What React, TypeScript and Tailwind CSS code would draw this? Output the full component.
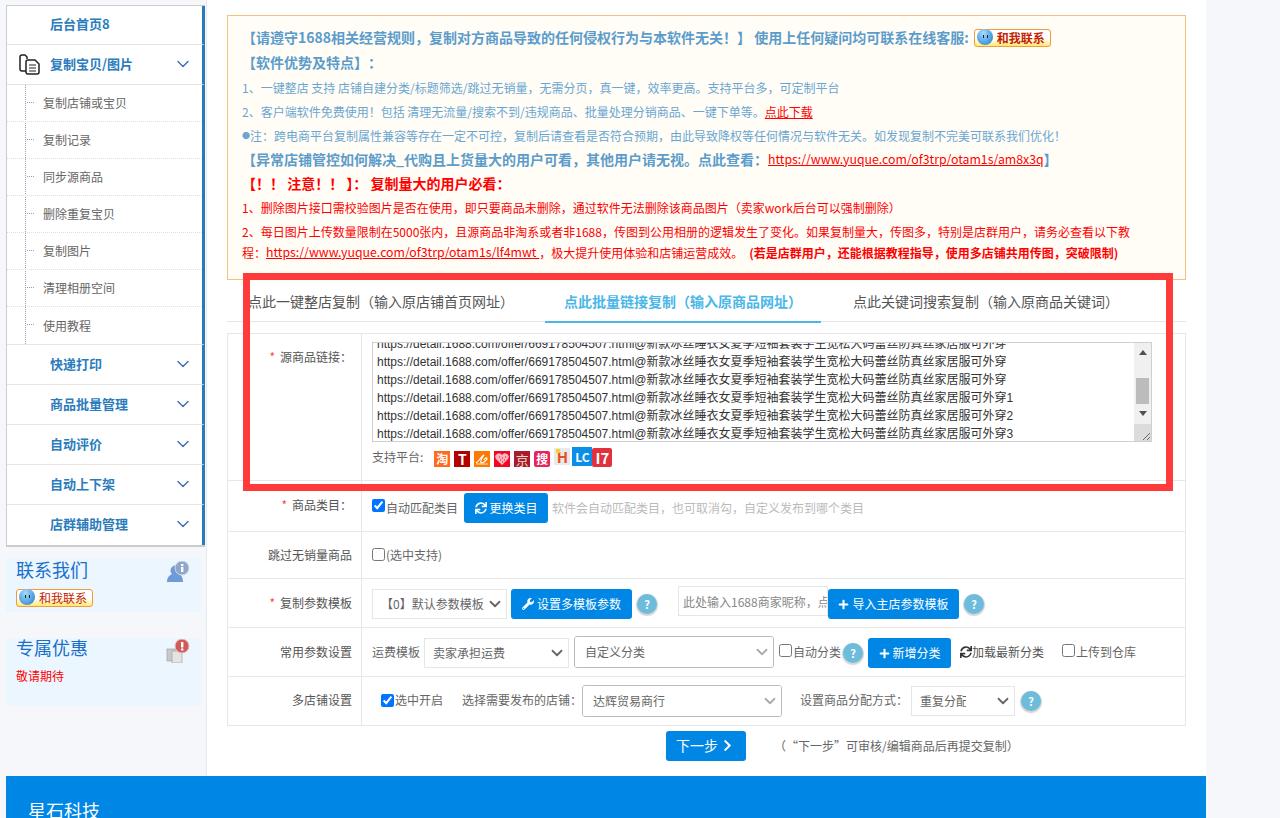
import { ChevronDown } from 'lucide-react';
import { FaChevronRight, FaPlus, FaSync, FaWrench } from 'react-icons/fa';
import type { ReactNode } from 'react';

const subItems = ['复制店铺或宝贝', '复制记录', '同步源商品', '删除重复宝贝', '复制图片', '清理相册空间', '使用教程'];
const lowerItems = ['快递打印', '商品批量管理', '自动评价', '自动上下架', '店群辅助管理'];
const linkSuffixes = ['', '', '1', '2', '3'];
const linkText = 'https://detail.1688.com/offer/669178504507.html@新款冰丝睡衣女夏季短袖套装学生宽松大码蕾丝防真丝家居服可外穿';

function QQBadge() {
  return (
    <span className="relative inline-flex h-[18px] w-[77px] items-center rounded-[3px] border border-[#f59a3c] bg-linear-to-b from-white from-50% to-[#ffe96a] pl-[22px] text-[12px] leading-none text-[#c32300]">
      <span className="absolute -top-[1px] left-[2px] h-[16px] w-[16px] rounded-full bg-radial-[at_40%_25%] from-[#a5dcfb] to-[#1b79d0]">
        <span className="absolute left-[6px] top-[6px] h-[3px] w-[1px] bg-[#123]" />
        <span className="absolute left-[10px] top-[6px] h-[3px] w-[1px] bg-[#123]" />
      </span>
      和我联系
    </span>
  );
}

function HelpDot() {
  return (
    <span className="flex h-[20px] w-[20px] shrink-0 items-center justify-center rounded-full bg-[#6dbcdc] text-[11px] font-bold leading-none text-white shadow-[0_1px_1px_1px_#d5d5d5]">
      ?
    </span>
  );
}

function BlueButton({ icon, children, className }: { icon?: ReactNode; children: ReactNode; className: string }) {
  return (
    <button className={`flex h-[30px] shrink-0 items-center justify-center gap-[3px] rounded-[3px] bg-[#0087e6] text-white ${className}`}>
      {icon}
      {children}
    </button>
  );
}

function FormRow({ label, required, height, top, raise, children }: { label: string; required?: boolean; height: string; top?: boolean; raise?: boolean; children: ReactNode }) {
  return (
    <div className={`flex border-b border-[#e7e7e7] last:border-b-0 ${height}`}>
      <div className={`flex w-[134px] shrink-0 justify-end border-r border-[#e7e7e7] pr-[9px] text-[#555] ${top ? 'pt-[14px]' : 'items-center'} ${raise ? 'pb-[2px]' : ''}`}>
        {required && <span className="mr-[5px] text-[#f44]">*</span>}
        {label}
      </div>
      <div className="flex min-w-0 flex-1 items-center pl-[10px]">{children}</div>
    </div>
  );
}

function SelectBox({ value, className, arrow, pad }: { value: string; className: string; arrow: string; pad: string }) {
  return (
    <div className={`relative shrink-0 ${className}`}>
      <select className={`h-full w-full appearance-none bg-white text-[12px] text-[#666] ${pad}`}>
        <option>{value}</option>
      </select>
      <ChevronDown className={`pointer-events-none absolute right-[2px] top-1/2 -translate-y-1/2 ${arrow}`} size={18} strokeWidth={2.4} />
    </div>
  );
}

function Sidebar() {
  return (
    <aside className="w-[207px] shrink-0 border-r border-[#e6e9f0] pl-[6px] pt-[5px]">
      <nav className="w-[199px] border-b-2 border-l border-t border-[#ccc] bg-white">
        <div className="flex h-[39px] items-center border-b border-r-[3px] border-b-[#e5e5e5] border-r-[#2a7ab8] pb-[2px] pl-[43px] text-[13px] font-bold text-[#2b7cbc]">
          后台首页8
        </div>
        <div className="relative flex h-[40px] items-center border-b border-r-[3px] border-b-[#e5e5e5] border-r-[#2a7ab8] pb-[2px] pl-[43px] text-[13px] font-bold text-[#2b7cbc]">
          <svg className="absolute left-[12px] top-[9px]" width="21" height="21" viewBox="0 0 21 21" fill="none" stroke="#222" strokeWidth="1.5">
            <path d="M7 17H3a2 2 0 0 1-2-2V3a2 2 0 0 1 2-2h3l2 2v2" />
            <path d="M9 6h7l4 4v8a2 2 0 0 1-2 2H9a2 2 0 0 1-2-2V8a2 2 0 0 1 2-2z" fill="#fff" />
            <path d="M10 11h7M10 14h7M10 17h7" strokeWidth="1.2" />
          </svg>
          复制宝贝/图片
          <ChevronDown className="absolute right-[9px] top-[9px] text-[#3f6fb5]" size={20} strokeWidth={1.7} />
        </div>
        <div className="relative border-b border-r-[3px] border-b-[#e5e5e5] border-r-[#2a7ab8]">
          <span className="absolute bottom-0 left-[18px] top-0 border-l border-dotted border-[#8aa0bc]" />
          {subItems.map((item, i) => (
            <div key={item} className={`relative flex h-[37px] items-center pl-[36px] text-[12px] text-[#666] ${i < 6 ? 'border-b border-dotted border-[#ddd]' : ''}`}>
              <span className="absolute left-[20px] top-[17px] w-[7px] border-t border-dotted border-[#8aa0bc]" />
              {item}
            </div>
          ))}
        </div>
        {lowerItems.map((item, i) => (
          <div key={item} className={`relative flex h-[40px] items-center border-r-[3px] border-r-[#2a7ab8] pb-[2px] pl-[43px] text-[13px] font-bold text-[#2b7cbc] ${i < 4 ? 'border-b border-b-[#e5e5e5]' : ''}`}>
            {item}
            <ChevronDown className="absolute right-[9px] top-[9px] text-[#3f6fb5]" size={20} strokeWidth={1.7} />
          </div>
        ))}
      </nav>

      <section className="relative mt-[11px] h-[54px] w-[195px] bg-[#ecf6fe] pl-[10px]">
        <div className="text-[18px] leading-[22px] text-[#1a6fc9]">联系我们</div>
        <div className="mt-[9px] flex"><QQBadge /></div>
        <svg className="absolute right-[11px] top-[3px]" width="24" height="22" viewBox="0 0 24 22">
          <path d="M1 21c0-5 3-7 5-8a5 5 0 1 1 7 0c2 1 4 3 4 8z" fill="#6f9ad8" />
          <circle cx="16" cy="7" r="7" fill="#8fa5c9" stroke="#d3dae6" />
          <rect x="15" y="6" width="2.4" height="5" fill="#fff" />
          <rect x="15" y="3" width="2.4" height="2" fill="#fff" />
        </svg>
      </section>

      <section className="relative mt-[26px] h-[68px] w-[195px] bg-[#ecf6fe] pl-[10px]">
        <div className="text-[18px] leading-[18px] text-[#1a6fc9]">专属优惠</div>
        <div className="mt-[11px] text-[12px] leading-[18px] text-[#f00]">敬请期待</div>
        <svg className="absolute right-[11px] top-[1px]" width="24" height="24" viewBox="0 0 24 24">
          <rect x="1" y="10" width="10" height="12" fill="#c9c9c9" stroke="#999" strokeWidth="0.6" />
          <rect x="6" y="12" width="10" height="12" fill="#e3e3e3" stroke="#999" strokeWidth="0.6" />
          <circle cx="16" cy="7" r="7" fill="#d0595a" stroke="#e6c3c3" />
          <rect x="15" y="3" width="2.4" height="5.5" fill="#fff" />
          <rect x="15" y="9.5" width="2.4" height="2" fill="#fff" />
        </svg>
      </section>
    </aside>
  );
}

function NoticeBox() {
  return (
    <div className="h-[265px] border border-[#f5bf7c] bg-[#fffdf6] pl-[14px] pt-[9px] text-[12px]">
      <div className="flex h-[25px] items-center text-[14px] font-bold text-[#5b9ccb]">
        【请遵守1688相关经营规则，复制对方商品导致的任何侵权行为与本软件无关！】 使用上任何疑问均可联系在线客服:
        <span className="ml-[5px] flex"><QQBadge /></span>
      </div>
      <div className="flex h-[25px] items-center text-[14px] font-bold text-[#5b9ccb]">【软件优势及特点】：</div>
      <div className="flex h-[25px] items-center text-[#6aa6d2]">1、一键整店 支持 店铺自建分类/标题筛选/跳过无销量，无需分页，真一键，效率更高。支持平台多，可定制平台</div>
      <div className="flex h-[24px] items-center text-[#6aa6d2]">
        2、客户端软件免费使用！包括 清理无流量/搜索不到/违规商品、批量处理分销商品、一键下单等。<a className="text-[#f00] underline">点此下载</a>
      </div>
      <div className="flex h-[23px] items-center text-[#6aa6d2]">
        <span className="inline-block w-[8px] text-[8px]">●</span>注：跨电商平台复制属性兼容等存在一定不可控，复制后请查看是否符合预期，由此导致降权等任何情况与软件无关。如发现复制不完美可联系我们优化！
      </div>
      <div className="flex h-[24px] items-center text-[14px] font-bold text-[#5b9ccb]">
        【异常店铺管控如何解决_代购且上货量大的用户可看，其他用户请无视。点此查看：
        <a className="text-[12.3px] font-normal text-[#f00] underline">https://www.yuque.com/of3trp/otam1s/am8x3q</a>】
      </div>
      <div className="flex h-[24px] items-center whitespace-pre text-[14px] font-bold text-[#f00] [text-spacing-trim:normal]">【！！ 注意！！ 】： 复制量大的用户必看：</div>
      <div className="flex h-[25px] items-center text-[#f00]">1、删除图片接口需校验图片是否在使用，即只要商品未删除，通过软件无法删除该商品图片（卖家work后台可以强制删除）</div>
      <div className="flex h-[23px] items-center text-[#f00]">2、每日图片上传数量限制在5000张内，且源商品非淘系或者非1688，传图到公用相册的逻辑发生了变化。如果复制量大，传图多，特别是店群用户，请务必查看以下教</div>
      <div className="flex h-[19px] items-center whitespace-pre text-[#f00]">
        程：<a className="text-[12.3px] underline">https://www.yuque.com/of3trp/otam1s/lf4mwt </a>，极大提升使用体验和店铺运营成效。
        <b className="ml-[6px]">(若是店群用户，还能根据教程指导，使用多店铺共用传图，突破限制)</b>
      </div>
    </div>
  );
}

function Tabs() {
  return (
    <div className="flex h-[42px] gap-[12px] border-b border-[#e6e6e6] pl-[2px] text-[14px] text-[#555]">
      <div className="flex h-[42px] items-center px-[19px]">点此一键整店复制（输入原店铺首页网址）</div>
      <div className="flex h-[43px] items-center border-b-2 border-[#4ab7e8] px-[19px] pt-[1px] font-bold text-[#4ab7e8]">点此批量链接复制（输入原商品网址）</div>
      <div className="ml-[1px] flex h-[42px] items-center px-[19px]">点此关键词搜索复制（输入原商品关键词）</div>
    </div>
  );
}

function LinksBox() {
  return (
    <div className="flex h-[100px] w-[780px] overflow-hidden border border-[#cdced8] font-['Liberation_Sans','Noto_Sans_CJK_SC',sans-serif] text-[12px] leading-[18px] text-[#333]">
      <div className="flex-1 overflow-hidden pl-[4px]">
        <div className="-mt-[8px] whitespace-nowrap">
          <div>{linkText}</div>
          {linkSuffixes.map((suffix, i) => (
            <div key={i}>{linkText + suffix}</div>
          ))}
        </div>
      </div>
      <div className="flex w-[17px] shrink-0 flex-col items-center bg-[#f0f0f0]">
        <span className="mt-[7px] h-0 w-0 border-x-[4px] border-b-[5px] border-x-transparent border-b-[#505050]" />
        <span className="mt-[23px] h-[27px] w-[13px] bg-[#bcbcbc]" />
        <span className="mt-[7px] h-0 w-0 border-x-[4px] border-t-[5px] border-x-transparent border-t-[#505050]" />
        <span className="mt-[8px] flex h-[17px] w-[17px] items-end justify-end bg-[#dcdcdc]">
          <svg width="9" height="9" viewBox="0 0 9 9" stroke="#666" strokeWidth="1"><path d="M1 8 8 1M5 8l3-3" /></svg>
        </span>
      </div>
    </div>
  );
}

function PlatformIcons() {
  return (
    <div className="ml-[11px] mt-[4px] flex h-[16px] items-start gap-[4px] font-bold">
      <span className="flex h-[16px] w-[16px] items-center justify-center bg-[#ff6a1f] text-[12px] leading-none text-white">淘</span>
      <span className="flex h-[16px] w-[16px] items-center justify-center bg-[#b30000] text-[14px] leading-none text-white">T</span>
      <svg width="16" height="16" viewBox="0 0 16 16" fill="none" stroke="#fff" strokeWidth="1.2" className="bg-[#ff7a00]">
        <path d="M2 12c3-1 5-7 8-8-2 2-4 7-3 8 2 0 5-2 6-4 0-2-2-1-3 1" />
        <path d="M2 13h12" strokeWidth="0.8" />
      </svg>
      <svg width="16" height="16" viewBox="0 0 16 16" className="bg-[#ee0a24]">
        <path d="M8 14 2 8a3.4 3.4 0 0 1 6-4 3.4 3.4 0 0 1 6 4z" fill="#ffb3bd" />
        <path d="M5 6h1M8 7h1M11 6h1M6 9h1M10 9h1M8 11h1" stroke="#ee0a24" strokeWidth="1" />
      </svg>
      <span className="flex h-[16px] w-[16px] items-center justify-center bg-[#a81c2e] text-[13px] font-normal leading-none text-[#f3d9c6]">京</span>
      <span className="flex h-[16px] w-[16px] items-center justify-center rounded-[2px] bg-[#e8245f] text-[12px] leading-none text-white">搜</span>
      <span className="relative -mt-[3px] flex h-[17px] w-[16px] items-center justify-center bg-[#e9e9e9] text-[15px] leading-none text-[#e8501e]">
        H
        <span className="absolute left-[2px] top-[1px] h-[4px] w-[4px] bg-[#f5d130]" />
      </span>
      <div className="-ml-[2px] -mt-[4px] flex items-start">
        <span className="flex h-[19px] w-[20px] items-center justify-center bg-[#0a8ee6] text-[12px] leading-none text-white">LC</span>
        <span className="mt-[1px] flex h-[19px] w-[20px] items-center justify-center rounded-[2px] bg-[#e2313c] text-[15px] leading-none text-white">I7</span>
      </div>
    </div>
  );
}

const flatSelect = 'h-[30px] border border-[#e5e6e7]';
const roundSelect = 'h-[32px] overflow-hidden rounded-[3px] border border-[#bbb]';

function CopyForm() {
  return (
    <div className="mt-[11px] border border-[#e7e7e7] text-[12px] text-[#666]">
      <FormRow label="源商品链接：" required height="h-[147px]" top>
        <div className="flex flex-col self-start pt-[8px]">
          <LinksBox />
          <div className="mt-[5px] flex h-[20px] items-center">
            支持平台:
            <PlatformIcons />
          </div>
        </div>
      </FormRow>
      <FormRow label="商品类目：" required raise height="h-[51px]">
        <input type="checkbox" defaultChecked className="-mt-[2px] h-[13px] w-[13px]" />
        <span className="ml-[1px] mt-[3px]">自动匹配类目</span>
        <BlueButton icon={<FaSync size={12} />} className="ml-[6px] mt-[4px] w-[84px] text-[12px]">更换类目</BlueButton>
        <span className="ml-[4px] mt-[3px] text-[#bbb]">软件会自动匹配类目，也可取消勾，自定义发布到哪个类目</span>
      </FormRow>
      <FormRow label="跳过无销量商品" height="h-[47px]">
        <input type="checkbox" className="-mt-[2px] h-[13px] w-[13px]" />
        <span className="ml-[1px]">(选中支持)</span>
      </FormRow>
      <FormRow label="复制参数模板" required height="h-[49px]">
        <SelectBox value="【0】默认参数模板" className={`${flatSelect} mt-[1px] w-[135px]`} pad="pl-[8px]" arrow="text-[#666]" />
        <BlueButton icon={<FaWrench size={12} />} className="ml-[4px] mt-[2px] w-[121px] text-[12px]">设置多模板参数</BlueButton>
        <span className="ml-[5px] mt-[2px]"><HelpDot /></span>
        <input readOnly placeholder="此处输入1688商家昵称，点击导入" className="-mt-[4px] ml-[21px] h-[30px] w-[150px] shrink-0 border border-[#e5e6e7] pl-[4px] text-[12px] placeholder:text-[#888]" />
        <BlueButton icon={<FaPlus size={11} />} className="mt-[2px] w-[131px] text-[12px]">导入主店参数模板</BlueButton>
        <span className="ml-[5px] mt-[2px]"><HelpDot /></span>
      </FormRow>
      <FormRow label="常用参数设置" height="h-[49px]">
        <span>运费模板</span>
        <SelectBox value="卖家承担运费" className={`${flatSelect} ml-[4px] mt-[2px] w-[145px]`} pad="pl-[8px]" arrow="text-[#666]" />
        <SelectBox value="自定义分类" className={`${roundSelect} ml-[5px] w-[200px]`} pad="pl-[10px]" arrow="text-[#aaa]" />
        <input type="checkbox" className="-mt-[3px] ml-[5px] h-[13px] w-[13px]" />
        <span className="ml-[1px]">自动分类</span>
        <span className="ml-[2px] mt-[2px]"><HelpDot /></span>
        <BlueButton icon={<FaPlus size={11} />} className="ml-[5px] mt-[2px] w-[83px] text-[12px]">新增分类</BlueButton>
        <FaSync size={12} className="ml-[9px] text-[#333]" />
        <span className="text-[#555]">加载最新分类</span>
        <input type="checkbox" className="-mt-[3px] ml-[18px] h-[13px] w-[13px]" />
        <span className="ml-[1px]">上传到仓库</span>
      </FormRow>
      <FormRow label="多店铺设置" raise height="h-[48px]">
        <input type="checkbox" defaultChecked className="-mt-[2px] ml-[9px] h-[13px] w-[13px]" />
        <span className="-mt-[2px] ml-[1px]">选中开启</span>
        <span className="-mt-[2px] ml-[19px]">选择需要发布的店铺：</span>
        <SelectBox value="达辉贸易商行" className={`${roundSelect} w-[200px]`} pad="pl-[10px]" arrow="text-[#aaa]" />
        <span className="-mt-[2px] ml-[18px]">设置商品分配方式：</span>
        <SelectBox value="重复分配" className={`${flatSelect} ml-[3px] w-[104px]`} pad="pl-[8px] pr-[48px]" arrow="text-[#666]" />
        <span className="ml-[6px]"><HelpDot /></span>
      </FormRow>
    </div>
  );
}

export default function App() {
  return (
    <div className="relative h-[818px] overflow-hidden bg-[#f5f7fb] font-['Noto_Sans_CJK_SC',sans-serif] text-[12px] [text-spacing-trim:space-all]">
      <div className="flex h-[776px] w-[1206px]">
        <Sidebar />
        <main className="flex-1 bg-white px-[20px] pt-[15px]">
          <NoticeBox />
          <Tabs />
          <CopyForm />
          <div className="mt-[5px] flex items-center pl-[439px] text-[#666]">
            <BlueButton icon={<FaChevronRight size={13} />} className="w-[80px] flex-row-reverse pb-[1px] pr-[2px] text-[14px]">下一步</BlueButton>
            <span className="ml-[28px]">（“下一步”可审核/编辑商品后再提交复制）</span>
          </div>
        </main>
      </div>
      <footer className="ml-[6px] h-[42px] w-[1200px] bg-[#0087e6] pl-[22px] pt-[22px] text-[18px] leading-[24px] text-white">星石科技</footer>
      {/* red highlight drawn over the screenshot */}
      <div className="absolute left-[243px] top-[273px] h-[218px] w-[930px] border-[7px] border-[#ff3a3a]" />
    </div>
  );
}
